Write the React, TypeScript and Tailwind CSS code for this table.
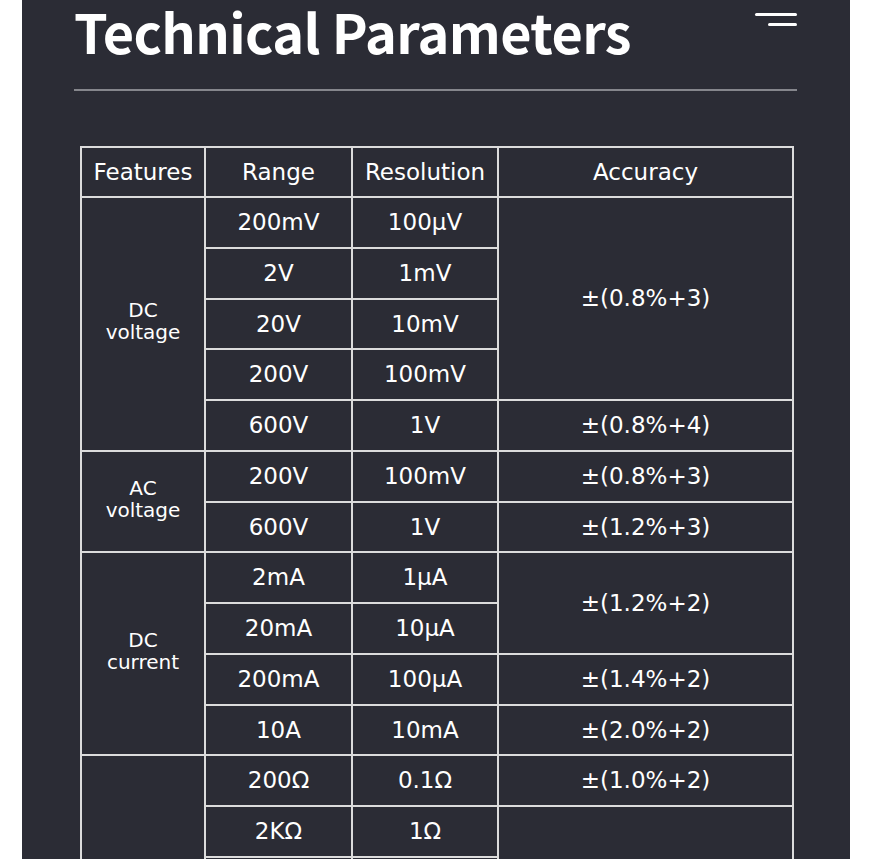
const rows: { feature?: string; span?: number; range: string; res: string; acc?: string; accSpan?: number }[] = [
  { feature: "DC\nvoltage", span: 5, range: "200mV", res: "100µV", acc: "±(0.8%+3)", accSpan: 4 },
  { range: "2V", res: "1mV" },
  { range: "20V", res: "10mV" },
  { range: "200V", res: "100mV" },
  { range: "600V", res: "1V", acc: "±(0.8%+4)" },
  { feature: "AC\nvoltage", span: 2, range: "200V", res: "100mV", acc: "±(0.8%+3)" },
  { range: "600V", res: "1V", acc: "±(1.2%+3)" },
  { feature: "DC\ncurrent", span: 4, range: "2mA", res: "1µA", acc: "±(1.2%+2)", accSpan: 2 },
  { range: "20mA", res: "10µA" },
  { range: "200mA", res: "100µA", acc: "±(1.4%+2)" },
  { range: "10A", res: "10mA", acc: "±(2.0%+2)" },
  { feature: "Resistance", span: 6, range: "200Ω", res: "0.1Ω", acc: "±(1.0%+2)" },
  { range: "2KΩ", res: "1Ω", acc: "±(0.8%+2)", accSpan: 4 },
  { range: "20KΩ", res: "10Ω" },
  { range: "200KΩ", res: "100Ω" },
  { range: "2MΩ", res: "1KΩ" },
  { range: "20MΩ", res: "10KΩ", acc: "±(1.0%+2)" },
];

const cell = "border-2 border-[#dcdcdc] text-center align-middle";

export default function App() {
  return (
    <div className="min-h-screen bg-white pl-[22px] pr-[23px] [font-family:'DejaVu_Sans',Verdana,sans-serif]">
      <div className="min-h-screen bg-[#2b2c35] pl-[52px] pr-[53px] pb-10">
        <div className="flex items-start justify-between">
          <h1 className="pt-[4px] text-[54px] leading-none font-bold text-white tracking-[-0.6px] [font-family:'Noto_Sans_CJK_SC','Noto_Sans',sans-serif]">
            Technical Parameters
          </h1>
          <div className="mt-[13px] flex flex-col items-end gap-[7px]">
            <span className="block h-[3px] w-[42px] rounded-full bg-white" />
            <span className="block h-[3px] w-[29px] rounded-full bg-white" />
          </div>
        </div>
        <div className="mt-[31px] h-[2px] bg-[#85868c]" />
        <table className="mt-[55px] ml-[6px] w-[712px] table-fixed border-collapse text-[23px] text-white">
          <colgroup>
            <col className="w-[124px]" />
            <col className="w-[147px]" />
            <col className="w-[146px]" />
            <col className="w-[295px]" />
          </colgroup>
          <thead>
            <tr className="h-[50px]">
              <th className={`${cell} font-normal`}>Features</th>
              <th className={`${cell} font-normal`}>Range</th>
              <th className={`${cell} font-normal`}>Resolution</th>
              <th className={`${cell} font-normal`}>Accuracy</th>
            </tr>
          </thead>
          <tbody>
            {rows.map((r, i) => (
              <tr key={i} className="h-[50.75px]">
                {r.feature && (
                  <td rowSpan={r.span} className={`${cell} pb-[6px] text-[20px] leading-[22px] whitespace-pre-line`}>
                    {r.feature}
                  </td>
                )}
                <td className={cell}>{r.range}</td>
                <td className={cell}>{r.res}</td>
                {r.acc && (
                  <td rowSpan={r.accSpan} className={cell}>
                    {r.acc}
                  </td>
                )}
              </tr>
            ))}
          </tbody>
        </table>
      </div>
    </div>
  );
}
